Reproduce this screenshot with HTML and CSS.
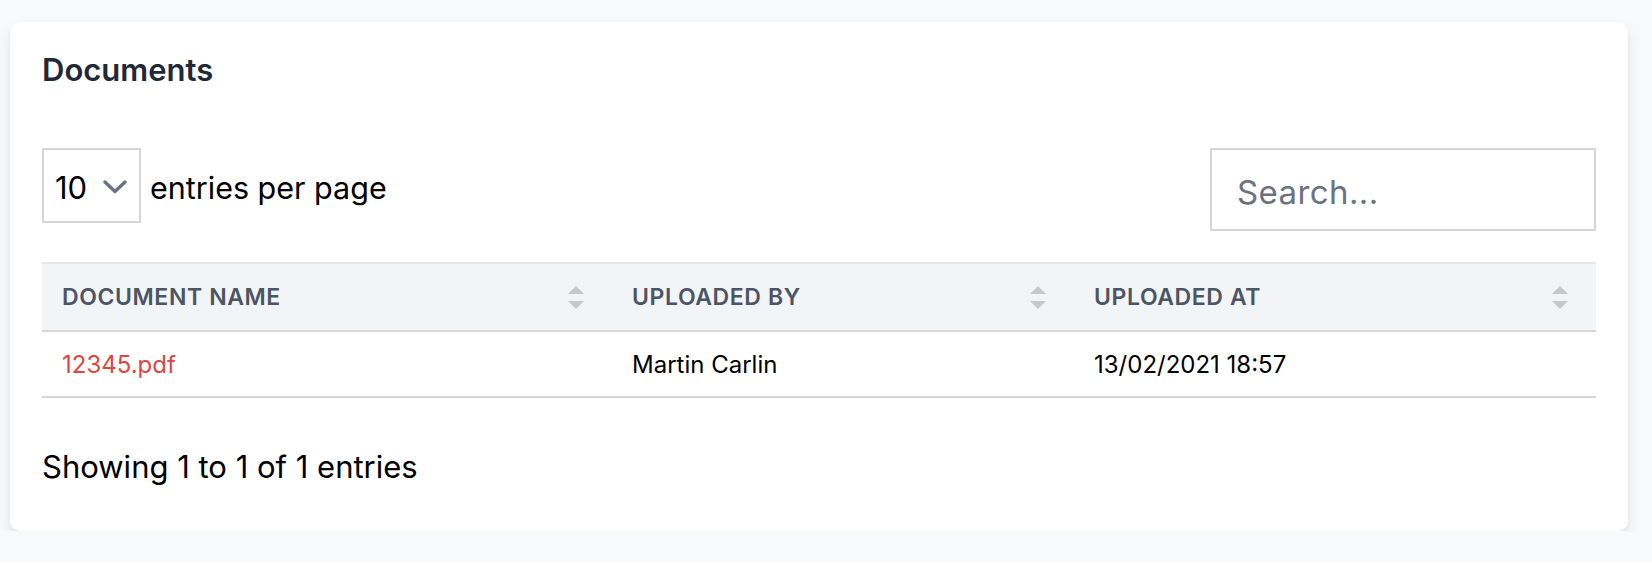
FILE: index.html
```html
<!DOCTYPE html>
<html lang="en">
<head>
<meta charset="utf-8">
<title>Documents</title>
<link rel="stylesheet" href="styles.css">
</head>
<body>
<div class="card">
  <h2 class="title">Documents</h2>
  <div class="toolbar">
    <div class="per-page">
      <div class="select">
        <span class="select-value">10</span>
        <svg class="chevron" width="24" height="14" viewBox="0 0 24 14"><path d="M2 2 L12 11.5 L22 2" fill="none" stroke="#6b7280" stroke-width="3.4" stroke-linecap="round" stroke-linejoin="round"/></svg>
      </div>
      <span class="per-page-label">entries per page</span>
    </div>
    <input class="search" type="text" placeholder="Search...">
  </div>
  <table class="table">
    <colgroup>
      <col class="c1"><col class="c2"><col class="c3">
    </colgroup>
    <thead>
      <tr>
        <th><div class="th-inner"><span>Document Name</span><svg class="sort" width="16" height="23" viewBox="0 0 16 23"><path d="M8 0 L16 8 L0 8 Z M0 15 L16 15 L8 23 Z" fill="#c8c8c8"/></svg></div></th>
        <th><div class="th-inner"><span>Uploaded By</span><svg class="sort" width="16" height="23" viewBox="0 0 16 23"><path d="M8 0 L16 8 L0 8 Z M0 15 L16 15 L8 23 Z" fill="#c8c8c8"/></svg></div></th>
        <th><div class="th-inner"><span>Uploaded At</span><svg class="sort" width="16" height="23" viewBox="0 0 16 23"><path d="M8 0 L16 8 L0 8 Z M0 15 L16 15 L8 23 Z" fill="#c8c8c8"/></svg></div></th>
      </tr>
    </thead>
    <tbody>
      <tr>
        <td><a class="doc-link" href="#">12345.pdf</a></td>
        <td>Martin Carlin</td>
        <td>13/02/2021 18:57</td>
      </tr>
    </tbody>
  </table>
  <div class="info">Showing 1 to 1 of 1 entries</div>
</div>
</body>
</html>
```
FILE: styles.css
```css
* { box-sizing: border-box; }
html, body { margin: 0; }
body {
  background: #f8f9fa;
  font-family: Inter, "Noto Sans", sans-serif;
  color: #000;
  padding: 22px 24px 0 10px;
}
.card {
  background: #fff;
  border-radius: 10px;
  box-shadow: 0 8px 16px rgba(0,0,0,0.08), 0 2px 4px rgba(0,0,0,0.05);
  padding: 28px 32px 42px 32px;
  height: 509px;
}
.title {
  margin: 0;
  font-size: 31px;
  line-height: 40px;
  font-weight: 600;
  color: #1f2937;
}
.toolbar {
  margin-top: 58px;
  display: flex;
  justify-content: space-between;
  align-items: flex-start;
}
.per-page {
  display: flex;
  align-items: center;
  gap: 9px;
}
.select {
  width: 99px;
  height: 75px;
  border: 2px solid #d6d6d6;
  display: flex;
  align-items: center;
  padding-left: 11px;
  gap: 16px;
}
.select-value {
  font-size: 31px;
  padding-top: 3px;
}
.chevron { display: block; margin-top: 2px; }
.per-page-label {
  font-size: 30.5px;
  padding-top: 3px;
}
.search {
  width: 386px;
  height: 83px;
  border: 2px solid #d6d6d6;
  padding: 4px 25px 0;
  font-family: inherit;
  font-size: 33px;
  letter-spacing: 0.4px;
  color: #000;
  outline: none;
  background: #fff;
}
.search::placeholder { color: #6b7280; }
.table {
  margin-top: 31px;
  width: 1554px;
  border-collapse: collapse;
  table-layout: fixed;
}
.c1 { width: 570px; }
.c2 { width: 462px; }
.c3 { width: 522px; }
.table th {
  background: #f3f4f6;
  border-top: 2px solid #e5e7eb;
  border-bottom: 2px solid #d6d6d6;
  height: 68px;
  padding: 0 28px 0 20px;
  text-align: left;
  font-size: 23px;
  font-weight: 600;
  letter-spacing: 0.6px;
  text-transform: uppercase;
  color: #4b5563;
}
.th-inner {
  display: flex;
  justify-content: space-between;
  align-items: center;
}
.sort { display: block; flex: none; }
.table td {
  height: 66px;
  border-bottom: 2px solid #d6d6d6;
  padding: 0 20px;
  font-size: 24px;
  color: #000;
}
.doc-link {
  color: #e0463f;
  text-decoration: none;
}
.info {
  margin-top: 45px;
  font-size: 31px;
  letter-spacing: 0;
  line-height: 48px;
}
```
